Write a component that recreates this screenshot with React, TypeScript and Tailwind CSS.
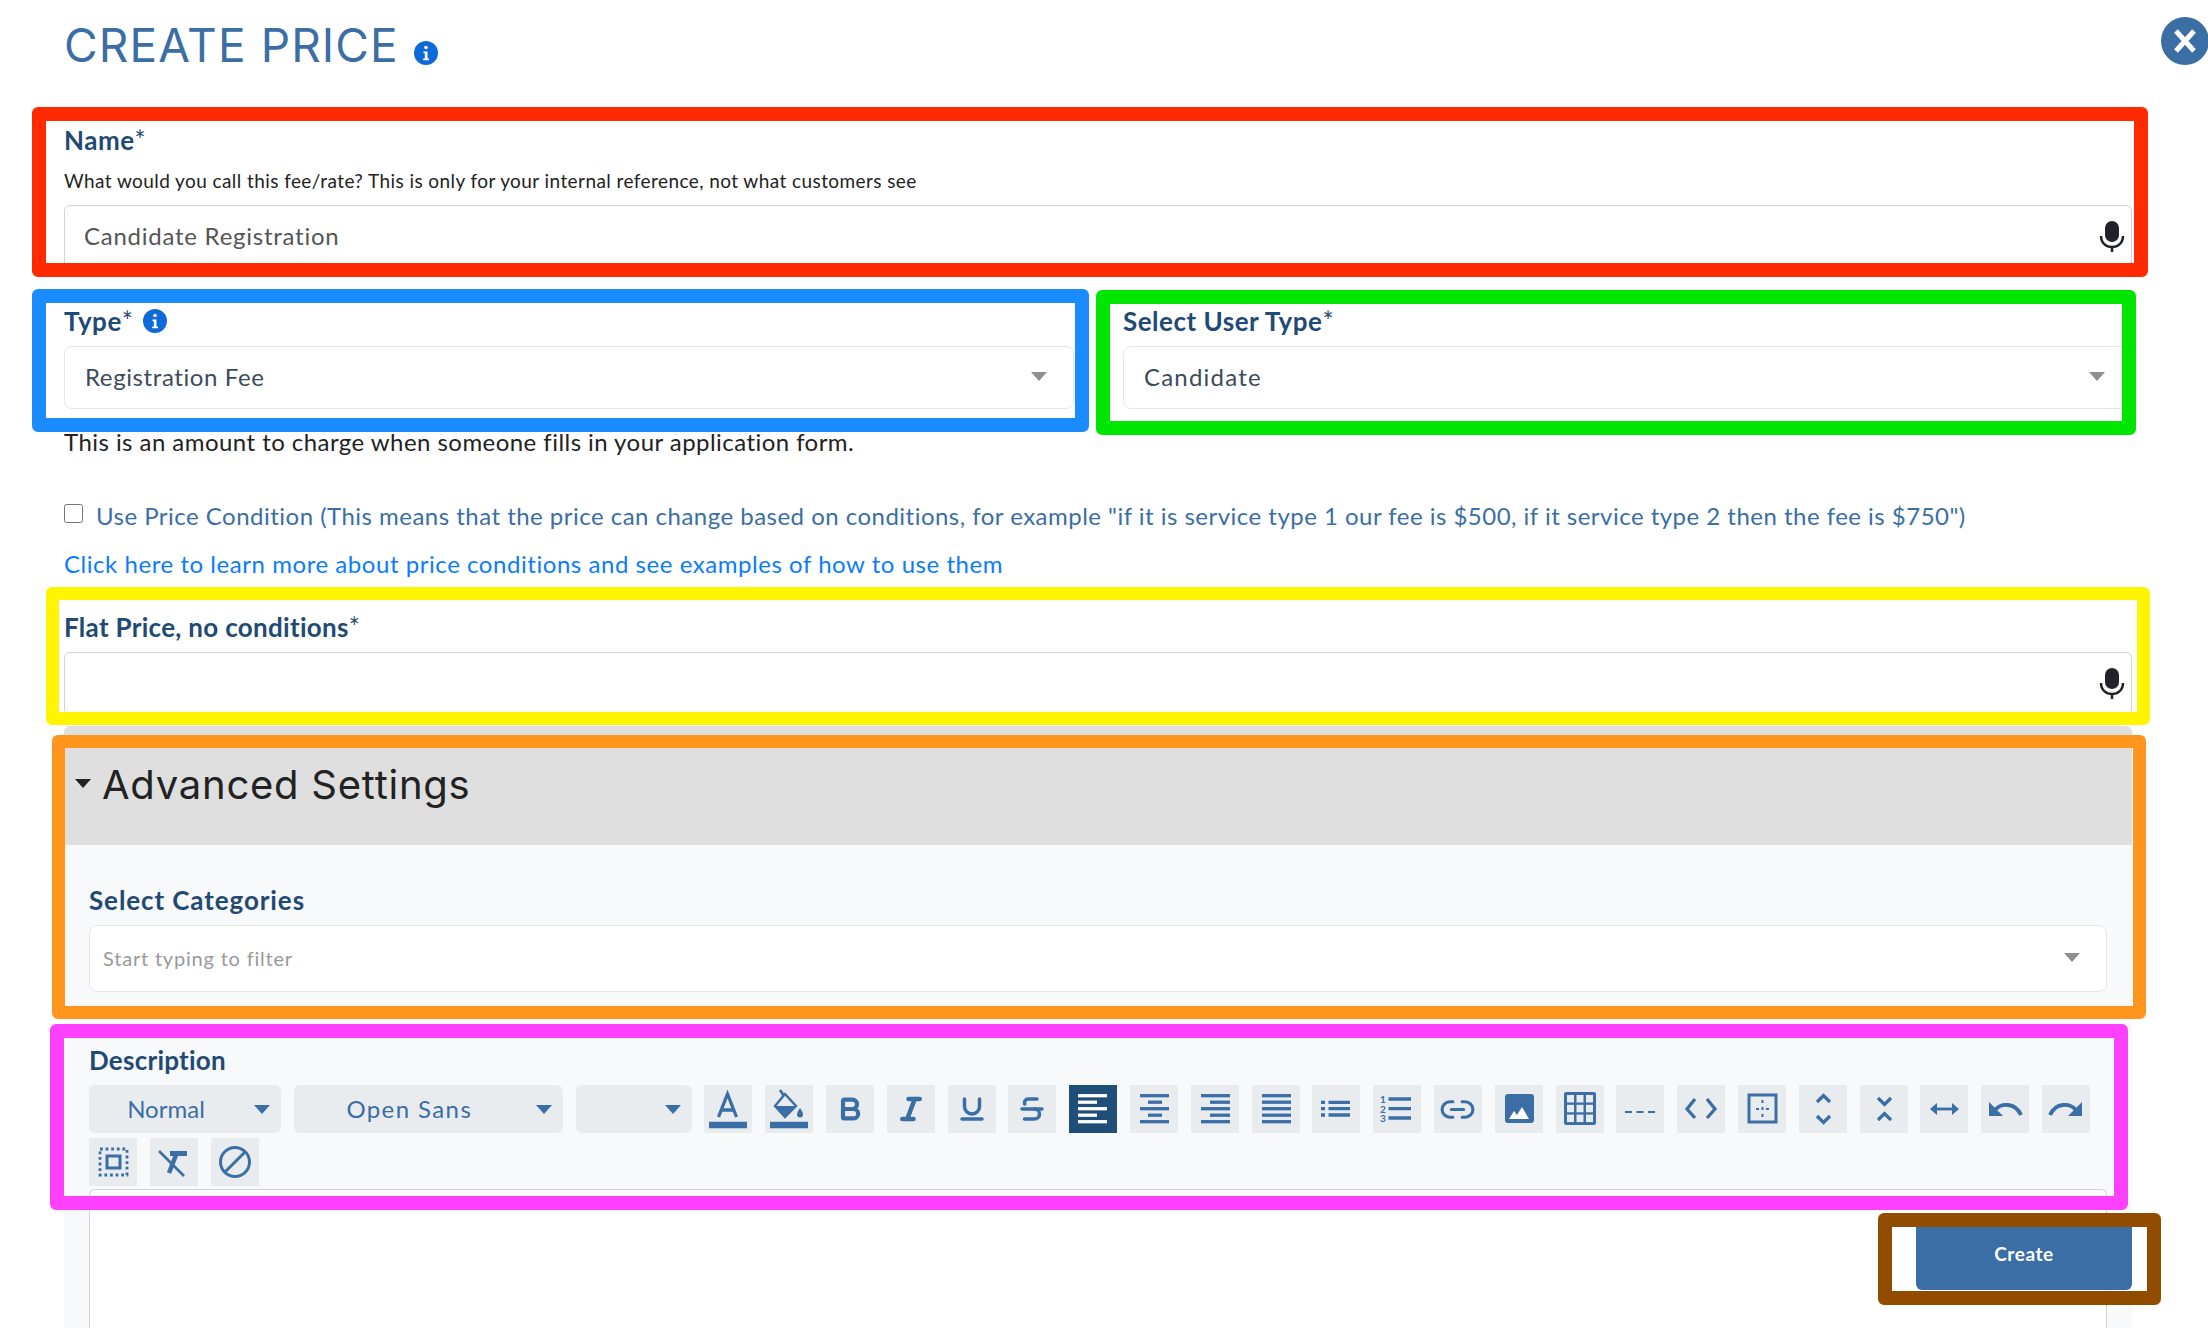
import { ReactNode } from 'react'
import { Bold, Italic, Link2, Strikethrough, Underline } from 'lucide-react'

function Label({ children, star, className }: { children: ReactNode; star?: boolean; className?: string }) {
  return (
    <div className={`h-6 flex items-center text-[26px] leading-6 font-bold text-[#1f4a73] ${className ?? 'tracking-[0.5px]'}`}>
      {children}
      {star && <span className="font-normal">*</span>}
    </div>
  )
}

function Caret({ className }: { className: string }) {
  return <span className={`w-0 h-0 border-x-[8px] border-x-transparent border-t-[9px] ${className}`} />
}

function Mic() {
  return (
    <svg className="absolute right-[5px] top-[14px]" width="28" height="32" viewBox="0 0 28 32" fill="none">
      <rect x="7" y="1" width="14" height="21" rx="7" fill="#202428" />
      <path d="M3 16c0 7 5 11 11 11s11-4 11-11" stroke="#202428" strokeWidth="2.5" />
      <path d="M14 26v6" stroke="#202428" strokeWidth="2.5" />
    </svg>
  )
}

function TextField({ value }: { value?: string }) {
  return (
    <div className="relative h-[63px] rounded-[6px] border border-[#d0d3d8] bg-white flex items-center pl-[19px] pb-[2px] text-[24px] tracking-[0.75px] text-[#555]">
      {value}
      <Mic />
    </div>
  )
}

function SelectField({ value, className }: { value: string; className: string }) {
  return (
    <div className={`mt-[13px] h-[63px] rounded-[8px] border border-[#e6e6e6] bg-white flex items-center justify-between pl-5 pr-[26px] pb-[2px] text-[24px] text-[#3d4a5c] ${className}`}>
      {value}
      <Caret className="border-t-[#8f8f8f]" />
    </div>
  )
}

function InfoDot({ className }: { className: string }) {
  return (
    <svg className={className} width="24" height="24" viewBox="0 0 24 24">
      <circle cx="12" cy="12" r="12" fill="#0d6ad8" />
      <circle cx="12" cy="6.5" r="1.8" fill="#fff" />
      <path d="M9.5 10.5h4v7h1.5v1.8H9.2v-1.8h1.6v-5.2H9.5z" fill="#fff" />
    </svg>
  )
}

function Drop({ label, className }: { label?: string; className: string }) {
  return (
    <div className={`h-12 rounded-[6px] bg-[#e9ecef] flex items-center justify-center relative text-[24px] text-[#3a6ea5] ${className}`}>
      {label}
      <Caret className="absolute right-[11px] top-[20px] border-t-[#3a6ea5]" />
    </div>
  )
}

function Tool({ children, active }: { children: ReactNode; active?: boolean }) {
  return (
    <div className={`w-12 h-12 flex items-center justify-center ${active ? 'bg-[#1f4e79] text-white' : 'bg-[#e9ecef] text-[#3a6ea5]'}`}>
      {children}
    </div>
  )
}

function Ico({ children }: { children: ReactNode }) {
  return (
    <svg width="48" height="48" viewBox="0 0 48 48" fill="none" stroke="currentColor" strokeWidth="3.3">
      {children}
    </svg>
  )
}

// x1,x2 for the five bars of the align icons
function AlignBars({ bars }: { bars: [number, number][] }) {
  return (
    <Ico>
      {bars.map(([a, b], i) => (
        <path key={i} d={`M${a} ${10.7 + i * 6.5}H${b}`} />
      ))}
    </Ico>
  )
}

const tableCells = [0, 1, 2, 3, 4, 5, 6, 7, 8]

function Toolbar() {
  return (
    <div className="mt-[13px] flex flex-wrap gap-x-[12.8px] gap-y-[5px]">
      <Drop label="Normal" className="w-[192px] pr-[38px]" />
      <Drop label="Open Sans" className="w-[269px] pr-[38px] tracking-[1.4px]" />
      <Drop className="w-[116px]" />
      <Tool>
        <Ico>
          <path d="M14.5 32 23.5 9l9 23M18 25h11" />
          <path d="M5 40h38" strokeWidth="6.4" />
        </Ico>
      </Tool>
      <Tool>
        <Ico>
          <path d="M15 5l4 6" strokeWidth="2.6" />
          <path d="M20 9 31 21 20 32 10 21z" strokeWidth="2.4" />
          <path d="M10 21h21L20 32z" fill="currentColor" stroke="none" />
          <path d="M35 23c2 3 3 5 3 6.5a3 3 0 0 1-6 0c0-1.5 1-3.5 3-6.5z" fill="currentColor" stroke="none" />
          <path d="M5 40h38" strokeWidth="6.4" />
        </Ico>
      </Tool>
      <Tool><Bold size={28} strokeWidth={3.6} /></Tool>
      <Tool><Italic size={30} strokeWidth={3.6} /></Tool>
      <Tool><Underline size={30} strokeWidth={2.8} /></Tool>
      <Tool><Strikethrough size={30} strokeWidth={2.8} /></Tool>
      <Tool active><AlignBars bars={[[9, 38], [9, 28], [9, 38], [9, 28], [9, 38]]} /></Tool>
      <Tool><AlignBars bars={[[10, 39], [18, 32], [10, 39], [18, 32], [10, 39]]} /></Tool>
      <Tool><AlignBars bars={[[10, 39], [19, 39], [10, 39], [19, 39], [10, 39]]} /></Tool>
      <Tool><AlignBars bars={[[10, 39], [10, 39], [10, 39], [10, 39], [10, 39]]} /></Tool>
      <Tool>
        <Ico>
          <path d="M9 17.3h4M9 23.7h4M9 30h4" />
          <path d="M16.5 17.3H38M16.5 23.7H38M16.5 30H38" />
        </Ico>
      </Tool>
      <Tool>
        <Ico>
          <path d="M15.5 14H38M15.5 23.7H38M15.5 33H38" />
          <text x="7" y="18" fontSize="10" fontWeight="700" fill="currentColor" stroke="none" fontFamily="Lato, sans-serif">1</text>
          <text x="7" y="28" fontSize="10" fontWeight="700" fill="currentColor" stroke="none" fontFamily="Lato, sans-serif">2</text>
          <text x="7" y="37" fontSize="10" fontWeight="700" fill="currentColor" stroke="none" fontFamily="Lato, sans-serif">3</text>
        </Ico>
      </Tool>
      <Tool><Link2 size={37} strokeWidth={2} /></Tool>
      <Tool>
        <Ico>
          <rect x="10" y="9" width="29" height="29" rx="3" fill="currentColor" stroke="none" />
          <path d="M14 34l5-8 3 4 5-8 7 12z" fill="#fff" stroke="none" />
        </Ico>
      </Tool>
      <Tool>
        <Ico>
          <rect x="8" y="7" width="32" height="33" rx="2" fill="currentColor" stroke="none" />
          {tableCells.map((n) => (
            <rect key={n} x={11 + (n % 3) * 9.5} y={10 + Math.floor(n / 3) * 9.8} width="7" height="7.5" fill="#e9ecef" stroke="none" />
          ))}
        </Ico>
      </Tool>
      <Tool>
        <Ico>
          <path d="M9 27h7M20.5 27h7M32 27h7" strokeWidth="2" />
        </Ico>
      </Tool>
      <Tool>
        <Ico>
          <path d="M18 14l-8 10 8 9M30 14l8 10-8 9" />
        </Ico>
      </Tool>
      <Tool>
        <Ico>
          <rect x="11" y="10" width="27" height="27" strokeWidth="3" />
          <path d="M24.5 15v3M24.5 22v3M24.5 29v3M18 24h3M28 24h3" strokeWidth="2" />
        </Ico>
      </Tool>
      <Tool>
        <Ico>
          <path d="M18 17l6.5-6.5L31 17M18 31l6.5 6.500L31 31" />
        </Ico>
      </Tool>
      <Tool>
        <Ico>
          <path d="M18 13l6.5 6.500L31 13M18 35l6.5-6.500L31 35" />
        </Ico>
      </Tool>
      <Tool>
        <Ico>
          <path d="M13 24h23" strokeWidth="2.8" />
          <path d="M10 24l7-6v12zM39 24l-7-6v12z" fill="currentColor" stroke="none" />
        </Ico>
      </Tool>
      <Tool>
        <Ico>
          <path d="M8 17v14h14z" fill="currentColor" stroke="none" />
          <path d="M14 25c6-7 20-8 26 5" strokeWidth="3.8" />
        </Ico>
      </Tool>
      <Tool>
        <Ico>
          <path d="M40 17v14H26z" fill="currentColor" stroke="none" />
          <path d="M34 25c-6-7-20-8-26 5" strokeWidth="3.8" />
        </Ico>
      </Tool>
      <Tool>
        <Ico>
          <rect x="11" y="11" width="27" height="26" strokeWidth="2.8" strokeDasharray="2.8 2.8" />
          <rect x="18" y="18" width="13" height="12" strokeWidth="3" />
        </Ico>
      </Tool>
      <Tool>
        <Ico>
          <path d="M20 13h17v5H20z" fill="currentColor" stroke="none" />
          <path d="M26 17l-7 18" strokeWidth="4.5" />
          <path d="M9 13l25 25" strokeWidth="2.6" />
        </Ico>
      </Tool>
      <Tool>
        <Ico>
          <circle cx="24" cy="24" r="14.5" strokeWidth="3" />
          <path d="M14 34 34 14" strokeWidth="3" />
        </Ico>
      </Tool>
    </div>
  )
}

export default function App() {
  return (
    <div className="relative w-[2208px] h-[1328px] overflow-hidden bg-white font-[Lato,sans-serif]">
      <div className="pl-[64px] w-[2132px] h-full flex flex-col">
        <div className="h-[128px] shrink-0 pt-[18px] flex items-start">
          <h1 className="text-[46px] leading-[54px] tracking-[1.1px] font-[Inter,sans-serif] font-normal text-[#3a6ea5]">CREATE PRICE</h1>
          <InfoDot className="ml-[15px] mt-[23px]" />
        </div>

        <Label star>Name</Label>
        <div className="mt-[17px] h-6 text-[19px] leading-6 tracking-[0.42px] text-[#222]">
          What would you call this fee/rate? This is only for your internal reference, not what customers see
        </div>
        <div className="mt-[12px]">
          <TextField value="Candidate Registration" />
        </div>

        <div className="mt-[41px] flex">
          <div className="w-[1010px]">
            <Label>
              Type<span className="font-normal">*</span>
              <InfoDot className="ml-[10px]" />
            </Label>
            <SelectField value="Registration Fee" className="tracking-[0.6px]" />
          </div>
          <div className="ml-[49px] flex-1">
            <Label star>Select User Type</Label>
            <SelectField value="Candidate" className="tracking-[1.2px]" />
          </div>
        </div>

        <div className="mt-[21px] h-6 text-[24px] leading-6 tracking-[0.45px] text-[#222]">
          This is an amount to charge when someone fills in your application form.
        </div>

        <div className="mt-[50px] h-6 flex items-center text-[24px] tracking-[0.48px] text-[#3a6ea5]">
          <input type="checkbox" readOnly className="w-[19px] h-[19px] mb-[6px] mr-[13px] shrink-0" />
          Use Price Condition (This means that the price can change based on conditions, for example "if it is service type 1 our fee is $500, if it service type 2 then the fee is $750")
        </div>

        <div className="mt-[24px] h-6 text-[24px] leading-6 tracking-[0.55px] text-[#0a7cff]">
          Click here to learn more about price conditions and see examples of how to use them
        </div>

        <div className="mt-[39px]">
          <Label star className="tracking-[0.3px]">Flat Price, no conditions</Label>
        </div>
        <div className="mt-[13px]">
          <TextField />
        </div>

        <div className="mt-[11px] flex-1 flex flex-col bg-[#f8f9fb] rounded-t-[6px]">
          <div className="h-[119px] shrink-0 bg-[#dfdfdf] rounded-t-[6px] flex items-start pl-[11px] pt-[34px]">
            <Caret className="mt-[19px] border-t-[#222]" />
            <span className="ml-[11px] text-[40px] leading-[50px] tracking-[0.75px] font-[Inter,sans-serif] text-[#222]">Advanced Settings</span>
          </div>
          <div className="flex-1 px-[25px] flex flex-col">
            <div className="mt-[43px]"><Label className="tracking-[0.9px]">Select Categories</Label></div>
            <div className="mt-[13px] h-[67px] rounded-[8px] border border-[#e6e6e6] bg-white flex items-center justify-between pl-[13px] pr-[26px] pb-[2px] text-[20px] tracking-[0.8px] text-[#999]">
              Start typing to filter
              <Caret className="border-t-[#8f8f8f]" />
            </div>
            <div className="mt-[56px]"><Label className="tracking-[0.25px]">Description</Label></div>
            <Toolbar />
            <div className="mt-[3px] flex-1 bg-white border-x border-t border-[#cfd2d6] rounded-t-[6px]" />
          </div>
        </div>
      </div>

      <div className="absolute left-[2161px] top-[17px] w-12 h-12 rounded-full bg-[#3a6ea5] flex items-center justify-center">
        <svg width="28" height="28" viewBox="0 0 28 28" fill="none" stroke="#fff" strokeWidth="5">
          <path d="M5 4l18 20M23 4 5 24" />
        </svg>
      </div>

      <button className="absolute left-[1916px] top-[1218px] w-[216px] h-[72px] rounded-[6px] bg-[#3a6ea5] text-white text-[19px] tracking-[0.6px] font-bold">
        Create
      </button>

      {/* annotation boxes drawn on top of the form */}
      <div className="absolute left-[32px] top-[107px] w-[2116px] h-[170px] border-[14px] border-[#ff2a00] rounded-[6px]" />
      <div className="absolute left-[32px] top-[289px] w-[1057px] h-[143px] border-[14px] border-[#1a8cff] rounded-[6px]" />
      <div className="absolute left-[1096px] top-[290px] w-[1040px] h-[145px] border-[14px] border-[#00e600] rounded-[6px]" />
      <div className="absolute left-[46px] top-[587px] w-[2104px] h-[138px] border-[13px] border-[#fff500] rounded-[6px]" />
      <div className="absolute left-[52px] top-[735px] w-[2094px] h-[284px] border-[13px] border-[#ff951c] rounded-[6px]" />
      <div className="absolute left-[50px] top-[1024px] w-[2078px] h-[186px] border-[14px] border-[#ff40ff] rounded-[6px]" />
      <div className="absolute left-[1878px] top-[1213px] w-[283px] h-[92px] border-[14px] border-[#924c00] rounded-[6px]" />
    </div>
  )
}
